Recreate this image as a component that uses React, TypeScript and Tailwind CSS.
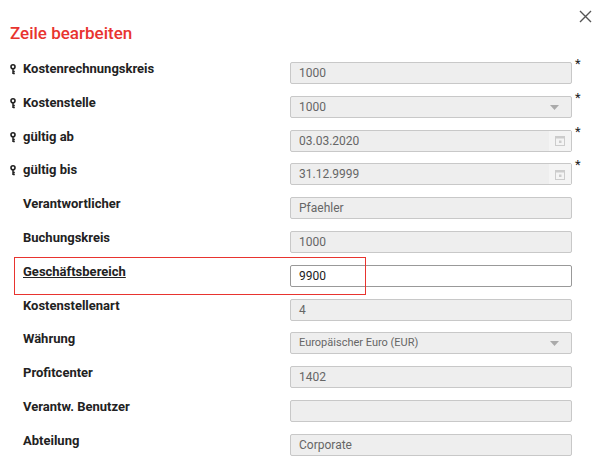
import React from "react";

const Key = () => (
  <svg width="6" height="11" viewBox="0 0 6 11" className="absolute left-[10px] top-[3px]">
    <circle cx="3" cy="2.8" r="2" fill="none" stroke="#222" strokeWidth="1.6" />
    <path d="M3 4.5V10M3 7.5H4.8M3 9.5H4.8" stroke="#222" strokeWidth="1.5" fill="none" />
  </svg>
);

const Cal = () => (
  <div className="absolute right-0 top-0 h-full w-[22px] bg-[#f4f4f4] flex items-center justify-center">
    <svg width="10" height="11" viewBox="0 0 10 11">
      <rect x="0.5" y="1.5" width="9" height="9" fill="none" stroke="#ccc" />
      <rect x="0.5" y="1.5" width="9" height="2" fill="#ccc" />
      <rect x="4" y="5.5" width="2.5" height="2.5" fill="#ccc" />
    </svg>
  </div>
);

type Row = { label: string; value: string; key?: boolean; req?: boolean; kind?: "select" | "date" | "edit"; small?: boolean };
const rows: Row[] = [
  { label: "Kostenrechnungskreis", value: "1000", key: true, req: true },
  { label: "Kostenstelle", value: "1000", key: true, req: true, kind: "select" },
  { label: "gültig ab", value: "03.03.2020", key: true, req: true, kind: "date" },
  { label: "gültig bis", value: "31.12.9999", key: true, req: true, kind: "date" },
  { label: "Verantwortlicher", value: "Pfaehler" },
  { label: "Buchungskreis", value: "1000" },
  { label: "Geschäftsbereich", value: "9900", kind: "edit" },
  { label: "Kostenstellenart", value: "4" },
  { label: "Währung", value: "Europäischer Euro (EUR)", kind: "select", small: true },
  { label: "Profitcenter", value: "1402" },
  { label: "Verantw. Benutzer", value: "" },
  { label: "Abteilung", value: "Corporate" },
];

export default function App() {
  return (
    <div className="relative w-[611px] h-[471px] bg-white overflow-hidden" style={{ fontFamily: "Roboto, 'Liberation Sans', sans-serif" }}>
      <div className="absolute right-[19px] top-[10px] text-[#444]">
        <svg width="13" height="13" viewBox="0 0 13 13"><path d="M1 1L12 12M12 1L1 12" stroke="#555" strokeWidth="1.4" /></svg>
      </div>
      <h1 className="pl-[10px] pt-[22px] text-[17px] leading-[22px] font-medium text-[#e8342f]">Zeile bearbeiten</h1>
      <div className="mt-[18px] flex flex-col gap-[11.8px]">
        {rows.map((r) => (
          <div key={r.label} className="relative flex h-[22px]">
            <div className="relative w-[290px] pl-[23px] text-[13px] font-bold text-[#222] leading-[16px] -mt-[1px]">
              {r.key && <Key />}
              <span className={r.kind === "edit" ? "underline" : ""}>{r.label}</span>
            </div>
            <div className={`relative w-[282px] h-[22px] border ${r.kind === "edit" ? "bg-white border-[#999]" : "bg-[#eeeeee] border-[#c8c8c8]"} rounded-[2px] flex items-center pl-[8px] ${r.small ? "text-[11px]" : "text-[12px]"} ${r.kind === "edit" ? "text-[#222]" : "text-[#666]"}`}>
              {r.value}
              {r.kind === "select" && (
                <svg width="9" height="5" viewBox="0 0 9 5" className="absolute right-[12px] top-[8px]"><path d="M0 0H9L4.5 5Z" fill="#aaa" /></svg>
              )}
              {r.kind === "date" && <Cal />}
            </div>
            {r.req && <span className="ml-[3px] -mt-[8px] text-[13px] text-[#222]">*</span>}
          </div>
        ))}
      </div>
      <div className="absolute left-[14px] top-[257px] w-[352px] h-[38px] border border-[#e8342f]" />
    </div>
  );
}
